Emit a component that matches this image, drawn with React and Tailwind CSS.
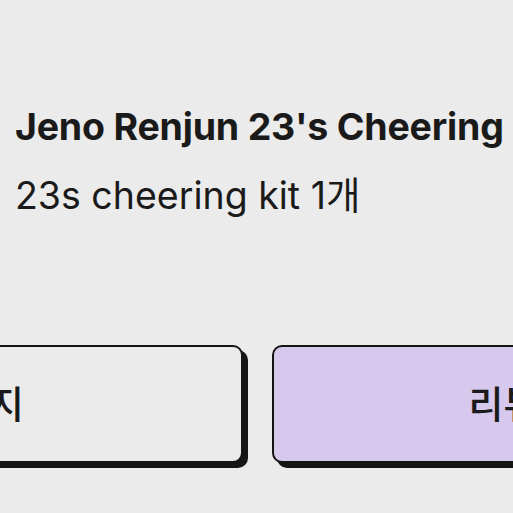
import React from "react";

export default function App() {
  return (
    <div
      className="w-full h-[513px] overflow-hidden bg-[#ebebeb] text-[#1a1a1a]"
      style={{ fontFamily: "Inter, 'Noto Sans CJK KR', sans-serif" }}
    >
      {/* Product info */}
      <div className="pl-[15px] pt-[103px]">
        <h1 className="text-[37.5px] leading-[48px] font-bold tracking-[-0.2px] whitespace-nowrap">
          Jeno Renjun 23's Cheering
        </h1>
        <p className="mt-[23px] text-[37.5px] leading-[44px] whitespace-nowrap">
          23s cheering kit 1개
        </p>
      </div>

      {/* Actions */}
      <div className="flex gap-[29px] ml-[-370px] mt-[127px]">
        <button className="w-[613px] h-[118px] shrink-0 flex items-center justify-center rounded-[10px] border-2 border-[#151515] bg-[#ebebeb] shadow-[5px_5px_0_#151515] text-[38px] font-medium">
          마이페이지
        </button>
        <button className="w-[613px] h-[118px] shrink-0 flex items-center justify-center rounded-[10px] border-2 border-[#151515] bg-[#d7c8ee] shadow-[5px_5px_0_#151515] text-[38px] font-medium">
          리뷰 작성하기
        </button>
      </div>
    </div>
  );
}
